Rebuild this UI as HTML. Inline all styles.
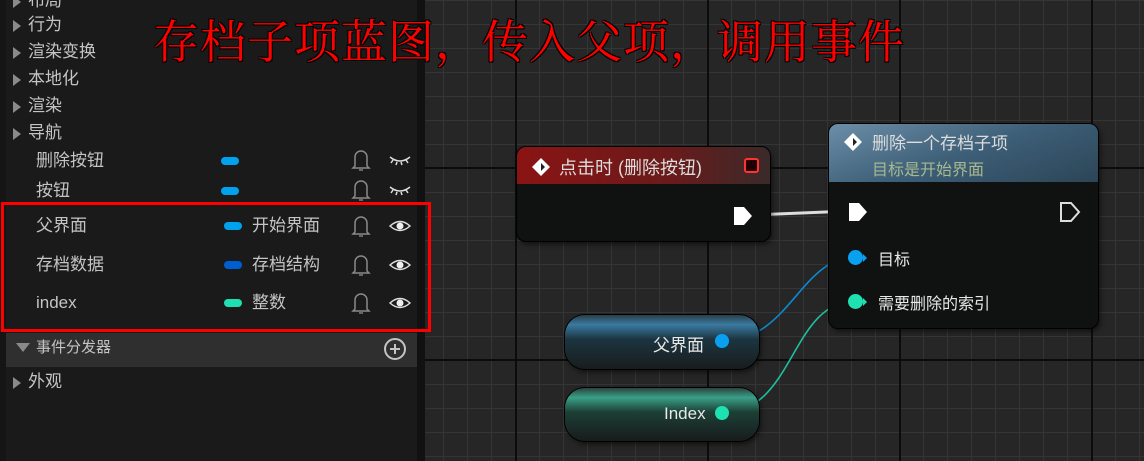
<!DOCTYPE html>
<html><head><meta charset="utf-8"><style>
*{margin:0;padding:0;box-sizing:border-box}
body{width:1144px;height:461px;overflow:hidden;background:#1a1a1a;font-family:"Liberation Sans","Noto Sans CJK SC",sans-serif;position:relative}
.abs{position:absolute}
#graph{left:425px;top:0;width:719px;height:461px;background-color:#262626;
background-image:
linear-gradient(90deg,#0c0c0c 2px,transparent 2px),
linear-gradient(0deg,#0c0c0c 2px,transparent 2px),
linear-gradient(90deg,#353535 1px,transparent 1px),
linear-gradient(0deg,#353535 1px,transparent 1px);
background-size:192px 192px,192px 192px,24px 24px,24px 24px;
background-position:90px 0,0 169px,18px 0,0 25px}
.row{position:absolute;left:0;color:#c4c4c4;font-size:17px;height:26px;line-height:26px}
.tri{display:inline-block;width:0;height:0;border-left:8px solid #8a8a8a;border-top:6px solid transparent;border-bottom:6px solid transparent;margin:0 7px 0 13px;vertical-align:middle}
.pill{position:absolute;width:18px;height:8px;border-radius:4px}
.node{position:absolute;border-radius:9px;background:#101211;box-shadow:0 0 0 1px #000,2px 3px 6px rgba(0,0,0,.6)}
.t{position:absolute;color:#e8e8e8;white-space:nowrap}
</style></head><body>
<div id="graph" class="abs"></div>
<div class="abs" style="left:417px;top:0;width:8px;height:461px;background:#111"></div>
<div class="abs" style="left:0;top:0;width:6px;height:461px;background:#151515"></div>

<div class="row" style="top:-12px"><span class="tri"></span>布局</div>
<div class="row" style="top:12px"><span class="tri"></span>行为</div>
<div class="row" style="top:39px"><span class="tri"></span>渲染变换</div>
<div class="row" style="top:66px"><span class="tri"></span>本地化</div>
<div class="row" style="top:93px"><span class="tri"></span>渲染</div>
<div class="row" style="top:120px"><span class="tri"></span>导航</div>
<div class="row" style="top:148px;left:36px">删除按钮</div>
<div class="row" style="top:178px;left:36px">按钮</div>
<div class="pill" style="left:221px;top:157px;background:#00a2ee"></div>
<div class="pill" style="left:221px;top:187px;background:#00a2ee"></div>
<div class="row" style="top:213px;left:36px">父界面</div>
<div class="row" style="top:252px;left:36px">存档数据</div>
<div class="row" style="top:290px;left:36px">index</div>
<div class="pill" style="left:224px;top:222px;background:#00a2ee"></div>
<div class="pill" style="left:224px;top:261px;background:#005fd0"></div>
<div class="pill" style="left:224px;top:299px;background:#1fe0b0"></div>
<div class="row" style="top:213px;left:252px">开始界面</div>
<div class="row" style="top:252px;left:252px;width:84px;overflow:hidden">存档结构体</div>
<div class="row" style="top:290px;left:252px">整数</div>
<svg class="abs" style="left:340px;top:136px" width="80" height="180" viewBox="0 0 80 180">
<g fill="none" stroke="#8a8a8a" stroke-width="1.5">
<path d="M15 30v-9a6 6 0 0 1 12 0v9l2 2H13z"/><path d="M15 60v-9a6 6 0 0 1 12 0v9l2 2H13z"/>
<path d="M15 96v-9a6 6 0 0 1 12 0v9l2 2H13z"/><path d="M15 135v-9a6 6 0 0 1 12 0v9l2 2H13z"/><path d="M15 173v-9a6 6 0 0 1 12 0v9l2 2H13z"/>
</g>
<g fill="#666"><rect x="19" y="33" width="4" height="2"/><rect x="19" y="63" width="4" height="2"/><rect x="19" y="99" width="4" height="2"/><rect x="19" y="138" width="4" height="2"/><rect x="19" y="176" width="4" height="2"/></g>
<g fill="none" stroke="#ddd" stroke-width="1.5">
<path d="M50 21q10 8 20 0M53 24l-2 3M57 26l-1 3M61 26l1 3M66 24l2 3"/>
<path d="M50 51q10 8 20 0M53 54l-2 3M57 56l-1 3M61 56l1 3M66 54l2 3"/>
<path d="M50 90q10-9 20 0q-10 9-20 0z"/><path d="M50 129q10-9 20 0q-10 9-20 0z"/><path d="M50 167q10-9 20 0q-10 9-20 0z"/>
</g>
<g fill="#eee"><circle cx="60" cy="90" r="3.5"/><circle cx="60" cy="129" r="3.5"/><circle cx="60" cy="167" r="3.5"/></g>
</svg>
<div class="abs" style="left:6px;top:333px;width:411px;height:34px;background:#2f2f2f"></div>
<div class="abs" style="left:16px;top:343px;width:0;height:0;border-top:9px solid #8a8a8a;border-left:7px solid transparent;border-right:7px solid transparent"></div>
<div class="row" style="top:335px;left:36px;font-size:15px">事件分发器</div>
<svg class="abs" style="left:382px;top:336px" width="26" height="26"><circle cx="13" cy="13" r="10" fill="none" stroke="#c4c4c4" stroke-width="2"/><path d="M13 8v10M8 13h10" stroke="#c4c4c4" stroke-width="2"/></svg>
<div class="row" style="top:369px"><span class="tri"></span>外观</div>
<div class="abs" style="left:1px;top:202px;width:430px;height:130px;border:3px solid #f00"></div>

<div class="abs" style="left:153px;top:11px;color:#f00;font-family:'Noto Serif CJK SC',serif;font-weight:normal;font-size:46px;line-height:56px;letter-spacing:1px;white-space:nowrap;text-shadow:1px 1px 0 #000,-1px -1px 0 #000,1px -1px 0 #000,-1px 1px 0 #000">存档子项蓝图，传入父项，调用事件</div>

<svg class="abs" style="left:0;top:0" width="1144" height="461">
<path d="M752 215 L850 211" stroke="#ddd" stroke-width="3"/>
<path d="M722 341 C790 341,800 257,856 257" stroke="#0a8ad0" stroke-width="1.6" fill="none"/>
<path d="M722 413 C795 413,790 301,856 301" stroke="#1fc0a0" stroke-width="1.6" fill="none"/>
</svg>

<div class="node" style="left:517px;top:147px;width:253px;height:94px">
<div style="position:absolute;left:0;top:0;right:0;height:37px;border-radius:9px 9px 0 0;background:linear-gradient(90deg,#8a1414,#6a1a1a 60%,#3a2a2a)"></div>
<svg class="abs" style="left:14px;top:10px" width="20" height="20"><path d="M10 1L19 10 10 19 1 10z" fill="#fff"/><path d="M10 6L14 10 10 14z" fill="#222"/></svg>
<div class="t" style="left:42px;top:7px;font-size:18px;color:#ddd">点击时 (删除按钮)</div>
<div class="abs" style="left:227px;top:11px;width:15px;height:15px;border:2px solid #f33;background:#200;border-radius:3px"></div>
<svg class="abs" style="left:215px;top:58px" width="22" height="22"><path d="M2 2h10l8 9-8 9H2z" fill="#fff"/></svg>
</div>

<div class="node" style="left:829px;top:124px;width:269px;height:204px">
<div style="position:absolute;left:0;top:0;right:0;height:58px;border-radius:9px 9px 0 0;background:linear-gradient(160deg,#6c8ea8,#3d5f78 50%,#2c4556)"></div>
<svg class="abs" style="left:14px;top:8px" width="20" height="20"><path d="M10 1L19 10 10 19 1 10z" fill="#fff"/><path d="M10 6L14 10 10 14z" fill="#222"/></svg>
<div class="t" style="left:43px;top:5px;font-size:17px;color:#ddd">删除一个存档子项</div>
<div class="t" style="left:43px;top:32px;font-size:16px;color:#a8b890">目标是开始界面</div>
<svg class="abs" style="left:18px;top:77px" width="22" height="22"><path d="M2 2h10l8 9-8 9H2z" fill="#fff"/></svg>
<svg class="abs" style="left:230px;top:77px" width="22" height="22"><path d="M2 2h10l8 9-8 9H2z" fill="none" stroke="#ddd" stroke-width="2"/></svg>
<div class="abs" style="left:19px;top:126px;width:15px;height:15px;border-radius:50%;background:#0aa0f0"></div>
<div class="abs" style="left:34px;top:130px;border-left:4px solid #0aa0f0;border-top:4px solid transparent;border-bottom:4px solid transparent"></div>
<div class="t" style="left:49px;top:122px;font-size:16px">目标</div>
<div class="abs" style="left:19px;top:170px;width:15px;height:15px;border-radius:50%;background:#1fe0b0"></div>
<div class="abs" style="left:34px;top:174px;border-left:4px solid #1fe0b0;border-top:4px solid transparent;border-bottom:4px solid transparent"></div>
<div class="t" style="left:49px;top:166px;font-size:16px">需要删除的索引</div>
</div>

<div class="node" style="left:565px;top:315px;width:194px;height:54px;border-radius:20px;background:linear-gradient(180deg,#2a3e48 0%,#3a7aa0 18%,#1c3440 45%,#1a2a30 70%,#181c1d)"></div>
<div class="t" style="left:653px;top:331px;font-size:17px">父界面</div>
<div class="abs" style="left:715px;top:334px;width:14px;height:14px;border-radius:50%;background:#0aa0f0"></div>
<div class="node" style="left:565px;top:388px;width:194px;height:53px;border-radius:20px;background:linear-gradient(180deg,#2a4440 0%,#3aa088 18%,#1c4036 45%,#1a2e2a 70%,#181c1b)"></div>
<div class="t" style="left:664px;top:404px;font-size:17px">Index</div>
<div class="abs" style="left:715px;top:406px;width:14px;height:14px;border-radius:50%;background:#1fe0b0"></div>
</body></html>
